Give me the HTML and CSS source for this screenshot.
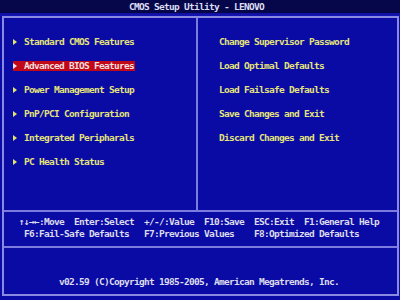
FILE: index.html
```html
<!DOCTYPE html>
<html>
<head>
<meta charset="utf-8">
<link rel="stylesheet" href="styles.css">
</head>
<body>
<div class="screen">
  <div class="title">CMOS Setup Utility - LENOVO</div>
  <div class="band"></div>
  <div class="frame">
    <div class="menu">
      <div class="col left">
        <div class="item"><svg class="arrow" width="4" height="6" viewBox="0 0 4 6"><polygon points="0,0 4,3 0,6"/></svg><span class="label">Standard CMOS Features</span></div>
        <div class="item active"><svg class="arrow" width="4" height="6" viewBox="0 0 4 6"><polygon points="0,0 4,3 0,6"/></svg><span class="label">Advanced BIOS Features</span></div>
        <div class="item"><svg class="arrow" width="4" height="6" viewBox="0 0 4 6"><polygon points="0,0 4,3 0,6"/></svg><span class="label">Power Management Setup</span></div>
        <div class="item"><svg class="arrow" width="4" height="6" viewBox="0 0 4 6"><polygon points="0,0 4,3 0,6"/></svg><span class="label">PnP/PCI Configuration</span></div>
        <div class="item"><svg class="arrow" width="4" height="6" viewBox="0 0 4 6"><polygon points="0,0 4,3 0,6"/></svg><span class="label">Integrated Peripharals</span></div>
        <div class="item"><svg class="arrow" width="4" height="6" viewBox="0 0 4 6"><polygon points="0,0 4,3 0,6"/></svg><span class="label">PC Health Status</span></div>
      </div>
      <div class="col right">
        <div class="item"><span class="label">Change Supervisor Password</span></div>
        <div class="item"><span class="label">Load Optimal Defaults</span></div>
        <div class="item"><span class="label">Load Failsafe Defaults</span></div>
        <div class="item"><span class="label">Save Changes and Exit</span></div>
        <div class="item"><span class="label">Discard Changes and Exit</span></div>
      </div>
    </div>
    <div class="help">
      <div class="line">↑↓→←:Move  Enter:Select  +/-/:Value  F10:Save  ESC:Exit  F1:General Help</div>
      <div class="line"> F6:Fail-Safe Defaults   F7:Previous Values    F8:Optimized Defaults</div>
    </div>
    <div class="copy">
      <div class="line">v02.59 (C)Copyright 1985-2005, American Megatrends, Inc.</div>
    </div>
  </div>
</div>
</body>
</html>
```
FILE: styles.css
```css
html, body {
  margin: 0;
  padding: 0;
  background: #0a0aa4;
}
.screen {
  width: 400px;
  height: 300px;
  overflow: hidden;
  background: #0a0aa4;
  font-family: "DejaVu Sans Mono", "Liberation Mono", monospace;
  font-weight: bold;
  font-size: 9.5px;
  letter-spacing: -0.72px;
}
.title {
  height: 13px;
  line-height: 13px;
  background: #06064a;
  color: #dcdcf0;
  text-align: center;
  padding-right: 7px;
  white-space: pre;
}
.band {
  height: 3px;
  background: linear-gradient(#10109a, #1414b8);
}
.frame {
  margin-left: 2px;
  width: 397px;
  height: 280px;
  box-sizing: border-box;
  border: 2px solid #8a8ae2;
  display: flex;
  flex-direction: column;
}
.menu {
  height: 192px;
  flex: none;
  display: flex;
}
.col {
  display: flex;
  flex-direction: column;
  gap: 14px;
  padding-top: 19px;
  box-sizing: border-box;
}
.left {
  width: 194px;
  border-right: 2px solid #7c7ce0;
  padding-left: 9px;
}
.right {
  padding-left: 21px;
}
.item {
  height: 10px;
  line-height: 10px;
  display: flex;
  align-items: center;
  align-self: flex-start;
  color: #e4e47a;
  padding-right: 1px;
  white-space: pre;
}
.arrow {
  fill: #e4e46a;
  margin-right: 7px;
  flex: none;
}
.item.active {
  background: #c00818;
  color: #f4dede;
}
.item.active .arrow {
  fill: #f4dede;
}
.help {
  height: 36px;
  flex: none;
  box-sizing: border-box;
  border-top: 2px solid #7c7ce0;
  padding: 4px 0 0 15px;
  color: #dcdcec;
}
.line {
  height: 12px;
  line-height: 12px;
  white-space: pre;
}
.copy {
  flex: 1;
  border-top: 2px solid #7c7ce0;
  padding: 28px 0 0 55px;
  color: #dcdcec;
}
```
